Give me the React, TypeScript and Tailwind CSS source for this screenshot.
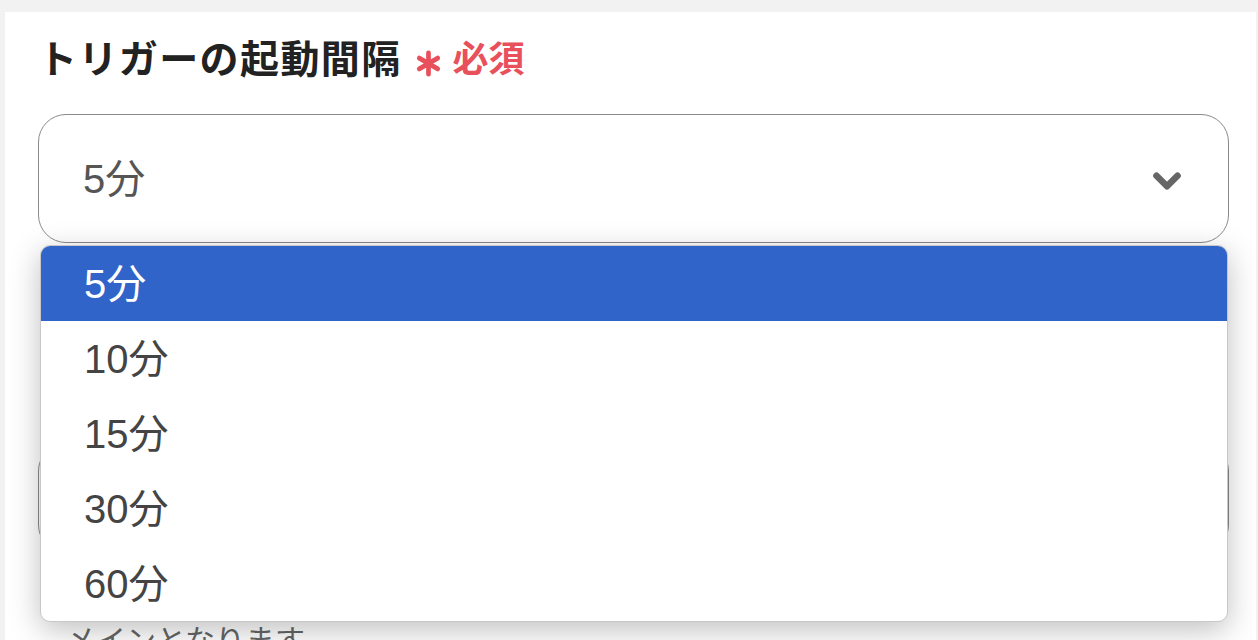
import { ChevronDown } from "lucide-react";

const options = ["5分", "10分", "15分", "30分", "60分"];

const font = { fontFamily: '"Liberation Sans", "Noto Sans CJK JP", sans-serif' };

export default function App() {
  return (
    <div className="h-[640px] w-[1258px] overflow-hidden bg-[#f2f2f2] pl-[5px] pt-[12px]" style={font}>
      <div className="relative h-[700px] w-[1251px] bg-white pl-[33px] pr-[27px] pt-[24px]">
        {/* label */}
        <div className="flex items-center leading-[48px]">
          <span className="text-[39px] font-bold tracking-[1.4px] text-[#222]">トリガーの起動間隔</span>
          <svg className="ml-[13px] mt-[6px] h-[27px] w-[27px] text-[#e8505b]" viewBox="0 0 24 24" fill="none" stroke="currentColor" strokeWidth={4.2} strokeLinecap="round">
            <path d="M12 2.5v19M3.8 7.2l16.4 9.6M3.8 16.8l16.4-9.6" />
          </svg>
          <span className="ml-[11px] text-[36px] font-bold text-[#e8505b]">必須</span>
        </div>

        {/* select */}
        <div className="mt-[30px] flex h-[129px] items-center justify-between rounded-[28px] border border-[#8a8a8a] pl-[44px] pr-[40px]">
          <span className="text-[40px] text-[#555]">5分</span>
          <ChevronDown className="mt-[4px] h-[42px] w-[42px] text-[#666]" strokeWidth={3.8} />
        </div>

        {/* content behind the open list */}
        <div className="mt-[200px] h-[110px] w-[1191px] rounded-[28px] border border-[#8a8a8a]" />
        <p className="mt-[65px] pl-[28px] text-[30px] text-[#666]">メインとなります</p>

        {/* open option list */}
        <ul className="absolute left-[35px] top-[233px] w-[1188px] overflow-hidden rounded-[10px] border border-[#c8c8c8] bg-white shadow-[0_8px_30px_rgba(0,0,0,0.25)]">
          {options.map((o, i) => (
            <li
              key={o}
              className={`flex h-[75px] items-center pl-[43px] text-[40px] ${i === 0 ? "bg-[#3064c9] text-white" : "text-[#444]"}`}
            >
              {o}
            </li>
          ))}
        </ul>
      </div>
    </div>
  );
}
